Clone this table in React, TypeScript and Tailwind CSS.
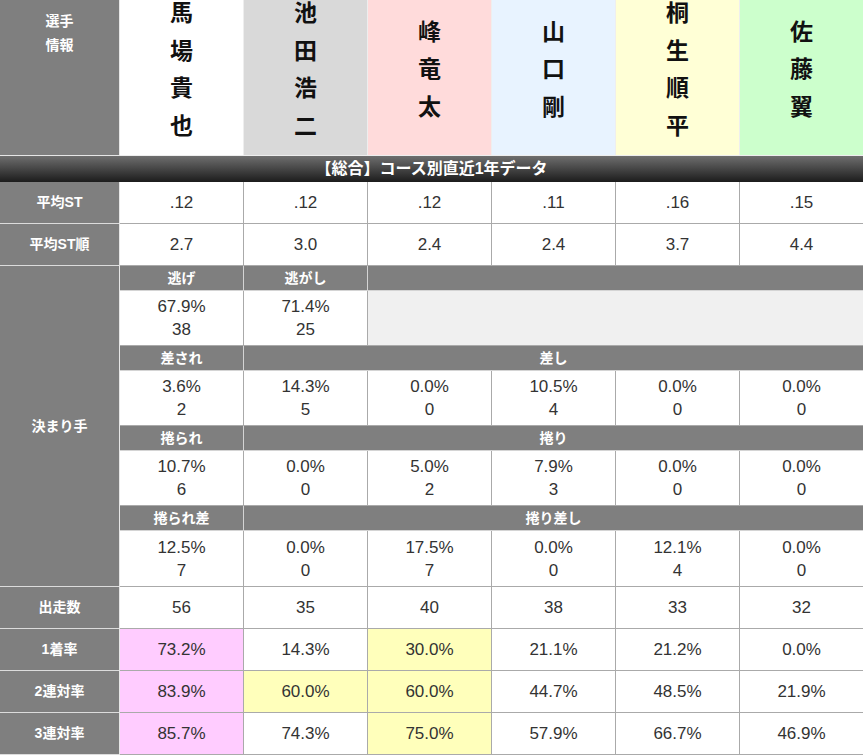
import React from "react";

const names = ["馬場貴也", "池田浩二", "峰竜太", "山口剛", "桐生順平", "佐藤翼"];
const headBg = [
  "bg-[#ffffff]",
  "bg-[#d9d9d9]",
  "bg-[#ffdbdb]",
  "bg-[#e8f3ff]",
  "bg-[#ffffd6]",
  "bg-[#ccffcc]",
];

type Hl = "" | "p" | "y";
type Cell = { v: string; hl?: Hl };

const simpleRows: { label: string; vals: Cell[] }[] = [
  { label: "平均ST", vals: [".12", ".12", ".12", ".11", ".16", ".15"].map((v) => ({ v })) },
  { label: "平均ST順", vals: ["2.7", "3.0", "2.4", "2.4", "3.7", "4.4"].map((v) => ({ v })) },
];

const bottomRows: { label: string; vals: Cell[] }[] = [
  { label: "出走数", vals: ["56", "35", "40", "38", "33", "32"].map((v) => ({ v })) },
  {
    label: "1着率",
    vals: [
      { v: "73.2%", hl: "p" },
      { v: "14.3%" },
      { v: "30.0%", hl: "y" },
      { v: "21.1%" },
      { v: "21.2%" },
      { v: "0.0%" },
    ],
  },
  {
    label: "2連対率",
    vals: [
      { v: "83.9%", hl: "p" },
      { v: "60.0%", hl: "y" },
      { v: "60.0%", hl: "y" },
      { v: "44.7%" },
      { v: "48.5%" },
      { v: "21.9%" },
    ],
  },
  {
    label: "3連対率",
    vals: [
      { v: "85.7%", hl: "p" },
      { v: "74.3%" },
      { v: "75.0%", hl: "y" },
      { v: "57.9%" },
      { v: "66.7%" },
      { v: "46.9%" },
    ],
  },
];

const kimarite: { sub1: string; sub2: string; vals: [string, string][] }[] = [
  {
    sub1: "差され",
    sub2: "差し",
    vals: [
      ["3.6%", "2"],
      ["14.3%", "5"],
      ["0.0%", "0"],
      ["10.5%", "4"],
      ["0.0%", "0"],
      ["0.0%", "0"],
    ],
  },
  {
    sub1: "捲られ",
    sub2: "捲り",
    vals: [
      ["10.7%", "6"],
      ["0.0%", "0"],
      ["5.0%", "2"],
      ["7.9%", "3"],
      ["0.0%", "0"],
      ["0.0%", "0"],
    ],
  },
  {
    sub1: "捲られ差",
    sub2: "捲り差し",
    vals: [
      ["12.5%", "7"],
      ["0.0%", "0"],
      ["17.5%", "7"],
      ["0.0%", "0"],
      ["12.1%", "4"],
      ["0.0%", "0"],
    ],
  },
];

const labelCls =
  "bg-[#7f7f7f] text-white font-bold text-[14px] flex items-center justify-center border-r border-b border-r-[#e6e6e6] border-b-[#dcdcdc]";
const subCls =
  "h-[25px] bg-[#7f7f7f] text-white font-bold text-[14px] flex items-center justify-center border-b border-b-[#d4d4d4]";

function bgFor(hl?: Hl) {
  if (hl === "p") return "bg-[#ffccff]";
  if (hl === "y") return "bg-[#ffffbb]";
  return "bg-white";
}

function rightBorder(i: number) {
  return i < 5 ? "border-r border-r-[#aaaaaa]" : "";
}

export default function App() {
  return (
    <div className="w-[863px] font-['Liberation_Sans','Noto_Sans_CJK_JP',sans-serif]">
      <div className="grid grid-cols-[120px_124px_124px_124px_124px_124px_123px]">
        {/* Header */}
        <div className="h-[156px] bg-[#7f7f7f] text-white font-bold text-[14px] leading-[23.5px] text-center pt-[10px] border-r border-b border-r-[#e6e6e6] border-b-[#e6e6e6]">
          <div>選手</div>
          <div>情報</div>
        </div>
        {names.map((n, i) => (
          <div
            key={n}
            className={`h-[156px] ${headBg[i]} flex flex-col items-center justify-center pb-[15px] border-b border-b-[#eeeeee] ${
              i < 5 ? "border-r border-r-[#eeeeee]" : ""
            }`}
          >
            {n.split("").map((c, k) => (
              <span key={k} className="text-[23px] leading-[37.5px] font-bold text-[#111]">
                {c}
              </span>
            ))}
          </div>
        ))}

        {/* Title bar */}
        <div className="col-span-7 h-[26px] bg-[linear-gradient(to_bottom,#6e6e6e,#1c1c1c)] text-white font-bold text-[16px] flex items-center justify-center">
          【総合】コース別直近1年データ
        </div>

        {/* Simple rows */}
        {simpleRows.map((r) => (
          <React.Fragment key={r.label}>
            <div className={`h-[42px] ${labelCls}`}>{r.label}</div>
            {r.vals.map((c, i) => (
              <div
                key={i}
                className={`h-[42px] ${bgFor(c.hl)} text-[#333] text-[17px] flex items-center justify-center border-b border-b-[#aaaaaa] ${rightBorder(i)}`}
              >
                {c.v}
              </div>
            ))}
          </React.Fragment>
        ))}

        {/* 決まり手 */}
        <div className={`row-span-8 ${labelCls}`}>決まり手</div>
        <div className={`${subCls} border-r border-r-[#d4d4d4]`}>逃げ</div>
        <div className={`${subCls} border-r border-r-[#d4d4d4]`}>逃がし</div>
        <div className={`col-span-4 ${subCls}`}></div>

        <div className="h-[55px] bg-white text-[#333] text-[17px] leading-[23px] flex flex-col items-center justify-center border-b border-b-[#aaaaaa] border-r border-r-[#aaaaaa]">
          <span>67.9%</span>
          <span>38</span>
        </div>
        <div className="h-[55px] bg-white text-[#333] text-[17px] leading-[23px] flex flex-col items-center justify-center border-b border-b-[#aaaaaa] border-r border-r-[#aaaaaa]">
          <span>71.4%</span>
          <span>25</span>
        </div>
        <div className="col-span-4 h-[55px] bg-[#f0f0f0] border-b border-b-[#aaaaaa]"></div>

        {kimarite.map((k, idx) => (
          <React.Fragment key={k.sub1}>
            <div className={`${subCls} border-r border-r-[#d4d4d4]`}>{k.sub1}</div>
            <div className={`col-span-5 ${subCls}`}>{k.sub2}</div>
            {k.vals.map((v, i) => (
              <div
                key={i}
                className={`${idx === 2 ? "h-[56px]" : "h-[55px]"} bg-white text-[#333] text-[17px] leading-[23px] flex flex-col items-center justify-center border-b border-b-[#aaaaaa] ${rightBorder(i)}`}
              >
                <span>{v[0]}</span>
                <span>{v[1]}</span>
              </div>
            ))}
          </React.Fragment>
        ))}

        {/* Bottom rows */}
        {bottomRows.map((r) => (
          <React.Fragment key={r.label}>
            <div className={`h-[42px] ${labelCls}`}>{r.label}</div>
            {r.vals.map((c, i) => (
              <div
                key={i}
                className={`h-[42px] ${bgFor(c.hl)} text-[#333] text-[17px] flex items-center justify-center border-b border-b-[#aaaaaa] ${rightBorder(i)}`}
              >
                {c.v}
              </div>
            ))}
          </React.Fragment>
        ))}
      </div>
    </div>
  );
}
